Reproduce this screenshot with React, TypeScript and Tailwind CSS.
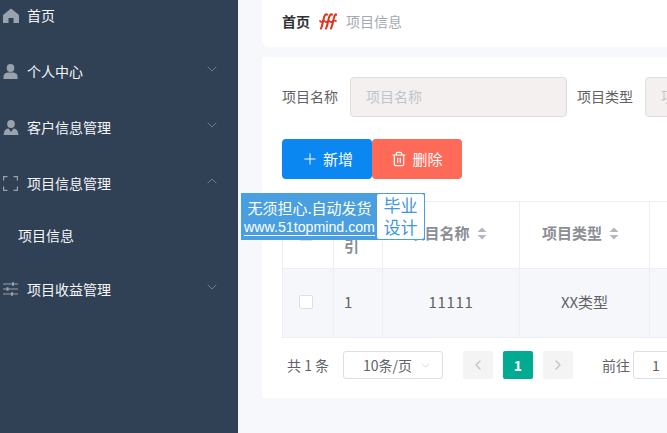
import { ChevronDown, ChevronLeft, ChevronRight, ChevronUp, Plus, Trash2 } from 'lucide-react';
import React from 'react';

const font = "font-['Noto_Sans_CJK_SC','Liberation_Sans',sans-serif]";

function HomeIcon() {
  return (
    <svg width="16" height="15" viewBox="0 0 16 15" className="text-[#9aa2ad]" fill="currentColor">
      <path d="M8 0.5 L16 7 V15 H10.5 V10 H5.5 V15 H0 V7 Z" />
    </svg>
  );
}

function UserIcon() {
  return (
    <svg width="15" height="15" viewBox="0 0 15 15" className="text-[#9aa2ad]" fill="currentColor">
      <ellipse cx="7.5" cy="4" rx="3.8" ry="4" />
      <path d="M0.5 15 V12.5 C0.5 10 3 8.8 5 8.6 H10 C12 8.8 14.5 10 14.5 12.5 V15 Z" />
    </svg>
  );
}

function UserTieIcon() {
  return (
    <svg width="16" height="15" viewBox="0 0 16 15" className="text-[#9aa2ad]" fill="currentColor">
      <ellipse cx="8" cy="4" rx="3.8" ry="4" />
      <path d="M0.5 15 L1.5 11 C2 9.6 4 8.8 5.5 8.5 L8 12 L10.5 8.5 C12 8.8 14 9.6 14.5 11 L15.5 15 Z" />
    </svg>
  );
}

function FrameIcon() {
  return (
    <svg width="15" height="15" viewBox="0 0 15 15" className="text-[#9aa2ad]" fill="none" stroke="currentColor" strokeWidth="1.2">
      <path d="M0.6 4.5 V0.6 H4.5 M10.5 0.6 H14.4 V4.5 M14.4 10.5 V14.4 H10.5 M4.5 14.4 H0.6 V10.5" />
    </svg>
  );
}

function SlidersIcon() {
  return (
    <svg width="15" height="14" viewBox="0 0 15 14" className="text-[#9aa2ad]" fill="none" stroke="currentColor" strokeWidth="1.2">
      <path d="M0 2 H15 M0 7 H15 M0 12 H15" />
      <path d="M10 0.3 V3.7 M4.5 5.3 V8.7 M9 10.3 V13.7" strokeWidth="2" />
    </svg>
  );
}

function Squiggle() {
  return (
    <svg width="18" height="17" viewBox="0 0 18 17" fill="none" stroke="#e2341d" strokeWidth="2.1" strokeLinecap="round">
      <path d="M2 15.5 C4 12 4 5 6 2 C6.6 1 7.6 1 8 1.6" />
      <path d="M7 15.5 C9 12 9 5 11 2 C11.6 1 12.6 1 13 1.6" />
      <path d="M12 15.5 C14 12 14 5 16 2 C16.6 1 17 1 17.4 1.6" />
      <path d="M1 8 C3 11 4 6 6 8.5 C8 11 9 6 11 8.5 C13 11 14 6 17 8" strokeWidth="1.7" />
    </svg>
  );
}

function SortCaret() {
  return (
    <svg width="10" height="13" viewBox="0 0 10 13" fill="#b4b7bd" className="ml-[7px]">
      <path d="M5 0.5 L9.5 5 H0.5 Z" />
      <path d="M5 12.5 L9.5 8 H0.5 Z" />
    </svg>
  );
}

function MenuItem(props: { icon: React.ReactNode; label: string; arrow?: 'up' | 'down' }) {
  return (
    <div className="flex h-14 items-center pl-[3px] pr-[18px] text-[14px] text-[#f4f6f9]">
      <span className="flex w-6 shrink-0">{props.icon}</span>
      <span className="flex-1">{props.label}</span>
      {props.arrow === 'down' && <ChevronDown size={16} strokeWidth={1.1} className="mt-[-4px] text-[#8592a3]" />}
      {props.arrow === 'up' && <ChevronUp size={16} strokeWidth={1.1} className="mt-[-4px] text-[#8592a3]" />}
    </div>
  );
}

function Sidebar() {
  return (
    <aside className="w-[238px] shrink-0 overflow-hidden bg-[#304156]">
      <div className="mt-[-13px]">
        <MenuItem icon={<HomeIcon />} label="首页" />
        <MenuItem icon={<UserIcon />} label="个人中心" arrow="down" />
        <MenuItem icon={<UserTieIcon />} label="客户信息管理" arrow="down" />
        <MenuItem icon={<FrameIcon />} label="项目信息管理" arrow="up" />
        <div className="flex h-[50px] items-center pb-[2px] pl-[18px] text-[14px] text-[#f4f6f9]">项目信息</div>
        <MenuItem icon={<SlidersIcon />} label="项目收益管理" arrow="down" />
      </div>
    </aside>
  );
}

function Watermark() {
  return (
    <div className="absolute left-[241px] top-[193px] flex h-[47px] w-[184px] bg-[#4a9fe0] p-[1px]">
      <div className="flex w-[135px] flex-col items-center justify-center text-white">
        <span className="text-[15px] leading-[22px]">无须担心.自动发货</span>
        <span className="border-b border-white font-['Liberation_Sans',sans-serif] text-[14.2px] leading-[16px]">www.51topmind.com</span>
      </div>
      <div className="flex flex-1 flex-col items-center justify-center rounded-[2px] bg-white pb-[2px] text-[17px] leading-[22px] text-[#3f97dc]">
        <span>毕业</span>
        <span>设计</span>
      </div>
    </div>
  );
}

function Th(props: { className: string; children?: React.ReactNode }) {
  return (
    <div className={`flex shrink-0 items-center justify-center border-r border-[#ebeef5] pb-[3px] text-[15px] font-bold text-[#8b8e94] ${props.className}`}>
      {props.children}
    </div>
  );
}

function Td(props: { className: string; children?: React.ReactNode }) {
  return (
    <div className={`flex shrink-0 items-center justify-center border-r border-[#ebeef5] pb-[2px] text-[15px] text-[#606266] ${props.className}`}>
      {props.children}
    </div>
  );
}

function Checkbox() {
  return <span className="block h-3.5 w-3.5 rounded-[2px] border border-[#dcdfe6] bg-white" />;
}

function Table() {
  return (
    <div className="w-[560px] border-l border-t border-[#ebeef5]">
      <div className="flex h-[66px]">
        <Th className="w-[51px] pr-[4px]"><Checkbox /></Th>
        <Th className="w-[49px] justify-start pl-[10px] pt-[4px] leading-[20px]">序<br />引</Th>
        <Th className="w-[137px] pr-[6px]">项目名称<SortCaret /></Th>
        <Th className="w-[130px] pr-[8px]">项目类型<SortCaret /></Th>
        <Th className="flex-1" />
      </div>
      <div className="flex h-[70px] border-y border-[#ebeef5] bg-[#f5f7fa]">
        <Td className="w-[51px] pr-[4px]"><Checkbox /></Td>
        <Td className="w-[49px] justify-start pl-[10px]">1</Td>
        <Td className="w-[137px] tracking-[0.7px]">11111</Td>
        <Td className="w-[130px]">XX类型</Td>
        <Td className="flex-1" />
      </div>
    </div>
  );
}

function Pagination() {
  return (
    <div className="mt-[13px] flex items-center pl-[5px] text-[14px] text-[#606266]">
      <span className="w-[56px]">共 1 条</span>
      <div className="flex h-7 w-[100px] items-center justify-between rounded-[3px] border border-[#dcdfe6] pl-[19px] pr-2.5">
        <span>10条/页</span>
        <ChevronDown size={13} strokeWidth={1.2} className="text-[#c0c4cc]" />
      </div>
      <div className="ml-5 flex h-7 w-[30px] items-center justify-center rounded-[2px] bg-[#f4f4f5] text-[#c0c4cc]">
        <ChevronLeft size={16} strokeWidth={2} />
      </div>
      <div className="ml-[10px] flex h-7 w-[30px] items-center justify-center rounded-[2px] bg-[#00ab91] font-bold text-white">1</div>
      <div className="ml-[10px] flex h-7 w-[30px] items-center justify-center rounded-[2px] bg-[#f4f4f5] text-[#c0c4cc]">
        <ChevronRight size={16} strokeWidth={2} />
      </div>
      <span className="ml-[29px]">前往</span>
      <div className="ml-[3px] flex h-7 w-[46px] shrink-0 items-center justify-center rounded-[3px] border border-[#dcdfe6]">1</div>
    </div>
  );
}

export default function App() {
  return (
    <div className={`relative flex h-[433px] w-[667px] overflow-hidden bg-[#f6f8fb] ${font}`}>
      <Sidebar />
      <main className="min-w-0 flex-1 pl-6">
        <div className="flex h-[47px] w-[500px] items-center rounded-bl-lg bg-white pb-[4px] pl-5 text-[14px]">
          <span className="font-bold text-[#303133]">首页</span>
          <span className="ml-[9px] mr-[9px] flex"><Squiggle /></span>
          <span className="text-[#a4a8b0]">项目信息</span>
        </div>
        <section className="mt-[10px] h-[341px] w-[500px] rounded-l-[3px] bg-white pl-5 pt-5">
          <div className="flex items-center text-[14px] text-[#606266]">
            <span className="w-[68px] shrink-0 pb-[2px]">项目名称</span>
            <div className="flex h-10 w-[217px] shrink-0 items-center rounded border border-[#e0dddd] bg-[#f4f0f0] pb-[2px] pl-[15px] text-[#c0c4cc]">项目名称</div>
            <span className="ml-[10px] w-[68px] shrink-0 pb-[2px]">项目类型</span>
            <div className="flex h-10 w-[217px] shrink-0 items-center rounded border border-[#e0dddd] bg-[#f4f0f0] pb-[2px] pl-[15px] text-[#c0c4cc]">项目类型</div>
          </div>
          <div className="mt-[22px] flex">
            <button className="flex h-10 w-[90px] items-center justify-center gap-[4px] rounded bg-[#0a87f0] text-[15px] text-white">
              <Plus size={18} strokeWidth={1.3} />新增
            </button>
            <button className="flex h-10 w-[90px] items-center justify-center gap-[5px] rounded bg-[#fd6a57] text-[15px] text-white">
              <Trash2 size={16} strokeWidth={1.8} />删除
            </button>
          </div>
          <div className="mt-[22px]">
            <Table />
          </div>
          <Pagination />
        </section>
      </main>
      <Watermark />
    </div>
  );
}
